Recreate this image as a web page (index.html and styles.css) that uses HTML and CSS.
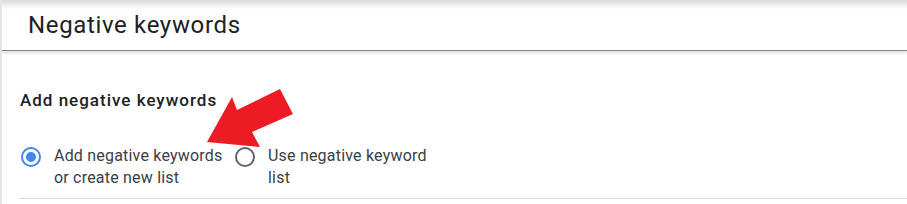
FILE: index.html
```html
<!DOCTYPE html>
<html lang="en">
<head>
  <meta charset="UTF-8" />
  <title>Negative keywords</title>
  <link rel="stylesheet" href="styles.css">
</head>
<body>

  <div class="page">
    <header class="cabecalho">
      <h1>Negative keywords</h1>
    </header>

    <section class="secao">
      <h2>Add negative keywords</h2>
      <div class="opcoes">
        <label class="opcao">
          <span class="radio marcado"></span>
          <span class="texto">Add negative keywords or create new list</span>
        </label>
        <label class="opcao">
          <span class="radio"></span>
          <span class="texto">Use negative keyword list</span>
        </label>
      </div>
    </section>

    <svg class="seta" width="96" height="66" viewBox="0 0 96 66">
      <polygon points="7,58 32,13 37,26 80,5 93,30 52,48 60,63" fill="#ed1c24"/>
    </svg>
  </div>

</body>
</html>
```

FILE: styles.css
```css
body {
  margin: 0;
  background: #fff;
  font-family: Roboto, "Liberation Sans", Arial, sans-serif;
}

.page {
  position: relative;
  height: 204px;
  border-left: 2px solid #e4e4e4;
  overflow: hidden;
}

.cabecalho {
  height: 50px;
  padding-left: 26px;
  background: linear-gradient(#d9d9d9, #fff 9px);
  border-bottom: 1px solid #858585;
  box-shadow: 0 2px 3px rgba(0, 0, 0, 0.14);
}

.cabecalho h1 {
  margin: 0;
  padding-top: 10px;
  font-size: 24px;
  line-height: 30px;
  font-weight: 400;
  letter-spacing: 0.65px;
  color: #202124;
}

.secao {
  margin-left: 17px;
  padding-top: 39px;
  padding-bottom: 9px;
  border-bottom: 1px solid #dadce0;
}

.secao h2 {
  margin: 0 0 35px 1px;
  font-size: 17px;
  line-height: 20px;
  font-weight: 500;
  letter-spacing: 1px;
  color: #202124;
}

.opcoes {
  display: flex;
  padding-left: 2px;
}

.opcao {
  display: flex;
  align-items: flex-start;
  width: 214px;
}

.radio {
  flex: none;
  width: 16px;
  height: 16px;
  margin-top: 2px;
  border: 2.5px solid #5f6368;
  border-radius: 50%;
  display: flex;
  align-items: center;
  justify-content: center;
}

.radio.marcado {
  border-color: #4285f4;
}

.radio.marcado::after {
  content: "";
  width: 10px;
  height: 10px;
  border-radius: 50%;
  background: #4285f4;
}

.texto {
  width: 172px;
  margin-left: 13px;
  font-size: 16px;
  line-height: 22px;
  letter-spacing: 0.2px;
  color: #3c4043;
}

.seta {
  position: absolute;
  left: 198px;
  top: 84px;
}
```
